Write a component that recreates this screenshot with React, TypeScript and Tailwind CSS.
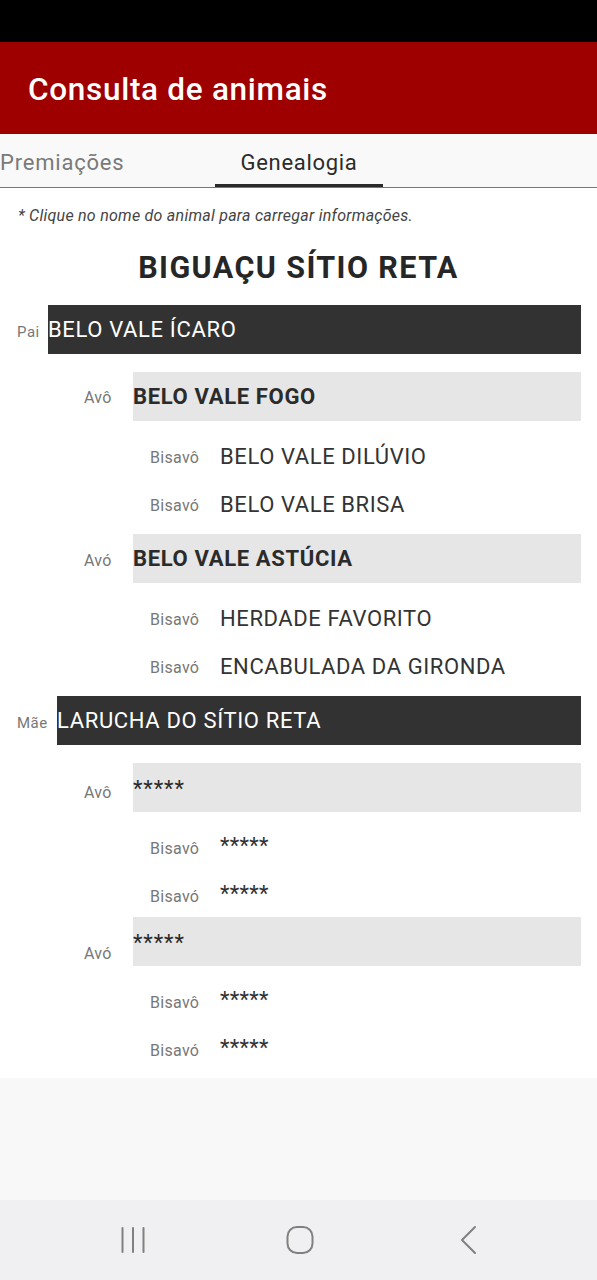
import React from 'react';

type Bisavo = { label: string; name: string };
type AvoT = { label: string; name: string; mt: string; labelPt: string; bis: Bisavo[] };
type Parent = { label: string; name: string; labelW: string; mt: string; avos: AvoT[] };

const tree: Parent[] = [
  {
    label: 'Pai',
    name: 'BELO VALE ÍCARO',
    labelW: 'w-[31px]',
    mt: 'mt-0',
    avos: [
      {
        label: 'Avô',
        name: 'BELO VALE FOGO',
        mt: 'mt-[18px]',
        labelPt: 'pt-[2px]',
        bis: [
          { label: 'Bisavô', name: 'BELO VALE DILÚVIO' },
          { label: 'Bisavó', name: 'BELO VALE BRISA' },
        ],
      },
      {
        label: 'Avó',
        name: 'BELO VALE ASTÚCIA',
        mt: 'mt-[6px]',
        labelPt: 'pt-[5px]',
        bis: [
          { label: 'Bisavô', name: 'HERDADE FAVORITO' },
          { label: 'Bisavó', name: 'ENCABULADA DA GIRONDA' },
        ],
      },
    ],
  },
  {
    label: 'Mãe',
    name: 'LARUCHA DO SÍTIO RETA',
    labelW: 'w-[40px]',
    mt: 'mt-[6px]',
    avos: [
      {
        label: 'Avô',
        name: '*****',
        mt: 'mt-[18px]',
        labelPt: 'pt-[10px]',
        bis: [
          { label: 'Bisavô', name: '*****' },
          { label: 'Bisavó', name: '*****' },
        ],
      },
      {
        label: 'Avó',
        name: '*****',
        mt: 'mt-[-2px]',
        labelPt: 'pt-[24px]',
        bis: [
          { label: 'Bisavô', name: '*****' },
          { label: 'Bisavó', name: '*****' },
        ],
      },
    ],
  },
];

const App = () => {
  return (
    <div className="w-[597px] h-[1280px] flex flex-col bg-[#f8f8f8] font-['Roboto',sans-serif] overflow-hidden">
      {/* status bar */}
      <div className="h-[42px] bg-black shrink-0" />

      {/* header */}
      <div className="h-[92px] bg-[#9e0000] flex items-center px-[28px] shrink-0">
        <h1 className="text-white text-[31.5px] tracking-[0.7px] font-medium leading-none pt-[4px]">
          Consulta de animais
        </h1>
      </div>

      {/* tabs */}
      <div className="h-[54px] bg-[#f9f9f9] flex border-b border-[#777] shrink-0">
        <div className="w-[215px] flex items-center text-[22px] tracking-[0.8px] text-[#7a7a7a] pt-[4px]">
          Premiações
        </div>
        <div className="w-[168px] flex flex-col">
          <div className="flex-1 flex items-center justify-center text-[22px] tracking-[0.7px] text-[#2b2b2b] pt-[7px]">
            Genealogia
          </div>
          <div className="h-[3px] bg-[#2a2a2a]" />
        </div>
      </div>

      {/* content */}
      <div className="bg-white pb-[5px]">
        <p className="pl-[18px] pt-[18px] text-[16px] tracking-[0.25px] italic text-[#444] leading-[20px]">
          * Clique no nome do animal para carregar informações.
        </p>
        <h2 className="text-center text-[30.5px] tracking-[1.4px] font-bold text-[#262626] leading-[36px] mt-[24px] mb-[19px]">
          BIGUAÇU SÍTIO RETA
        </h2>

        {tree.map((p, pi) => (
          <div key={pi} className={`flex flex-col ${p.mt}`}>
            <div className="flex items-center pl-[17px] pr-[16px]">
              <span className={`${p.labelW} text-[15px] tracking-[0.5px] text-[#777] shrink-0 pt-[5px]`}>
                {p.label}
              </span>
              <div className="flex-1 h-[49px] bg-[#323232] flex items-center text-white text-[22px] tracking-[0.65px]">
                {p.name}
              </div>
            </div>

            {p.avos.map((a, ai) => (
              <div key={ai} className={`flex flex-col ${a.mt}`}>
                <div className="flex items-center pl-[84px] pr-[16px]">
                  <span className={`w-[49px] text-[16px] tracking-[0.3px] text-[#777] shrink-0 ${a.labelPt}`}>
                    {a.label}
                  </span>
                  <div className="flex-1 h-[49px] bg-[#e6e6e6] flex items-center text-[22px] tracking-[0.65px] font-bold text-[#2b2b2b]">
                    {a.name === '*****' ? (
                      <span className="font-normal tracking-[0.9px] translate-y-[1px]">*****</span>
                    ) : (
                      a.name
                    )}
                  </div>
                </div>
                <div className="flex flex-col mt-[11px]">
                  {a.bis.map((b, bi) => (
                    <div key={bi} className="flex items-center h-[48px] pl-[150px]">
                      <span className="w-[70px] text-[16px] tracking-[0.3px] text-[#777] shrink-0 pt-[3px]">
                        {b.label}
                      </span>
                      {b.name === '*****' ? (
                        <span className="text-[22px] tracking-[0.3px] text-[#333] -translate-y-[2px]">*****</span>
                      ) : (
                        <span className="text-[22px] tracking-[0.6px] text-[#333]">{b.name}</span>
                      )}
                    </div>
                  ))}
                </div>
              </div>
            ))}
          </div>
        ))}
      </div>

      <div className="flex-1" />

      {/* nav bar */}
      <div className="h-[80px] bg-[#f0f0f2] flex items-center pl-[118px] gap-[137px] shrink-0">
        <svg width="30" height="28" viewBox="0 0 30 28">
          <g stroke="#808080" strokeWidth="2" strokeLinecap="round">
            <line x1="4.5" y1="2" x2="4.5" y2="26" />
            <line x1="15" y1="2" x2="15" y2="26" />
            <line x1="25.5" y1="2" x2="25.5" y2="26" />
          </g>
        </svg>
        <svg width="30" height="30" viewBox="0 0 30 30">
          <rect x="2.5" y="2" width="25" height="26" rx="9.5" fill="none" stroke="#808080" strokeWidth="2" />
        </svg>
        <svg width="30" height="30" viewBox="0 0 30 30">
          <polyline points="23,2 10,15 23,28" fill="none" stroke="#808080" strokeWidth="2" strokeLinecap="round" strokeLinejoin="round" />
        </svg>
      </div>
    </div>
  );
};

export default App;
